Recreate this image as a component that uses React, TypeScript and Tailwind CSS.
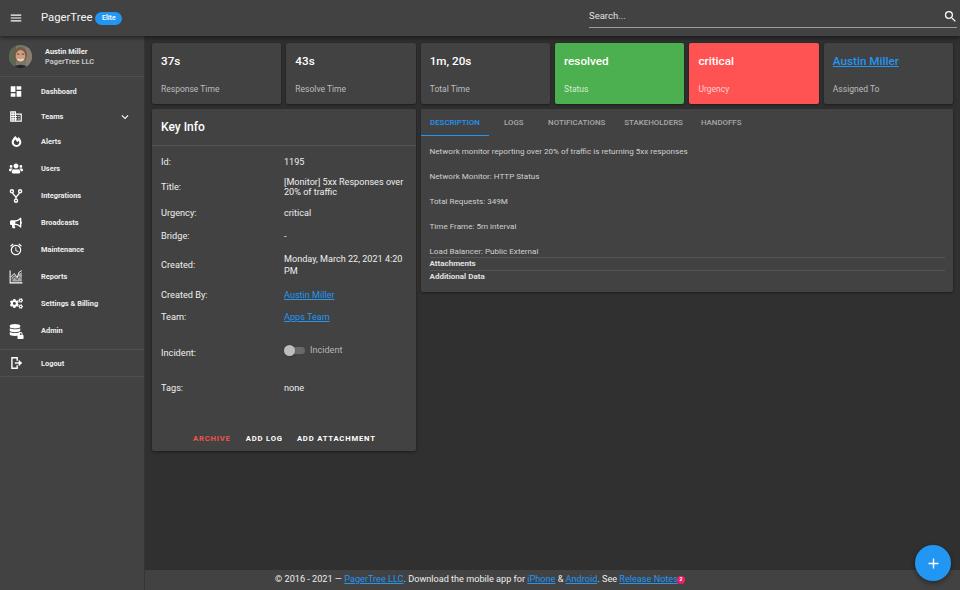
import { MdMenu, MdSearch, MdDashboard, MdDomain, MdExpandMore, MdAlarm, MdAdd } from "react-icons/md";
import { FaFireAlt, FaUsers, FaBullhorn, FaCogs, FaDatabase, FaLock } from "react-icons/fa";

function IntegrationIcon() {
  return (
    <svg width="14" height="14" viewBox="0 0 24 24" fill="none" stroke="currentColor" strokeWidth="2.4">
      <circle cx="5" cy="4" r="2.6" />
      <circle cx="19" cy="4" r="2.6" />
      <circle cx="12" cy="20" r="2.6" />
      <path d="M6 7l6 7 6-7M12 14v3" />
    </svg>
  );
}

function ReportIcon() {
  return (
    <svg width="15" height="14" viewBox="0 0 24 24" fill="none">
      <path d="M1 1h1.8v20.2H23V23H1z" fill="currentColor" />
      <path d="M4.5 19.5V13l4.5-4 4.5 5 3.5-7 5-3v15.5z" fill="currentColor" opacity=".55" />
      <path d="M3 12l6-6 5 7 3-9 5-3" stroke="currentColor" strokeWidth="1.6" />
      <path d="M4 20l5-8 5 5 3-6 5 5" stroke="#424242" strokeWidth="1.2" />
    </svg>
  );
}

function LogoutIcon() {
  return (
    <svg width="14" height="14" viewBox="0 0 24 24" fill="none" stroke="currentColor" strokeWidth="2.4">
      <path d="M14 8V3H5v18h9v-5" />
      <path d="M10 12h11" />
      <path d="M17 7.5v9l5-4.5z" fill="currentColor" strokeWidth="1" />
    </svg>
  );
}

function AdminIcon() {
  return (
    <span className="relative block w-[14px] h-[14px]">
      <FaDatabase size={12} />
      <FaLock size={7} className="absolute right-[-1px] bottom-[-1px]" />
    </span>
  );
}

function Avatar() {
  return (
    <svg width="23" height="23" viewBox="0 0 23 23" className="rounded-full shrink-0">
      <rect width="23" height="23" fill="#77786a" />
      <rect x="0" y="0" width="7" height="23" fill="#5c6650" />
      <rect x="17" y="0" width="6" height="23" fill="#8a7d72" />
      <ellipse cx="11.5" cy="9.5" rx="6.6" ry="7.6" fill="#7a5a44" />
      <ellipse cx="11.5" cy="11" rx="4.8" ry="6" fill="#cf9f84" />
      <path d="M8.5 14q3 2.2 6 0" stroke="#f6e9df" strokeWidth="1.1" fill="none" />
      <rect x="8" y="8.6" width="2.4" height="1" fill="#5a4034" />
      <rect x="12.8" y="8.6" width="2.4" height="1" fill="#5a4034" />
      <path d="M3 23q8.5-6.5 17 0z" fill="#23262e" />
    </svg>
  );
}

const nav = [
  { label: "Dashboard", icon: <MdDashboard size={15} />, h: "h-[25px]" },
  { label: "Teams", icon: <MdDomain size={15} />, h: "h-[25px]", chevron: true },
  { label: "Alerts", icon: <FaFireAlt size={11} />, h: "h-[25px]" },
  { label: "Users", icon: <FaUsers size={15} />, h: "h-[29px]" },
  { label: "Integrations", icon: <IntegrationIcon />, h: "h-[25px]" },
  { label: "Broadcasts", icon: <FaBullhorn size={12} />, h: "h-[29px]" },
  { label: "Maintenance", icon: <MdAlarm size={15} />, h: "h-[25px]" },
  { label: "Reports", icon: <ReportIcon />, h: "h-[29px]" },
  { label: "Settings & Billing", icon: <FaCogs size={13} />, h: "h-[25px]" },
  { label: "Admin", icon: <AdminIcon />, h: "h-[29px]" },
];

function NavItem({ label, icon, h, chevron }: { label: string; icon: React.ReactNode; h: string; chevron?: boolean }) {
  return (
    <div className={`flex items-center ${h} pl-[9px] pr-[12px] text-white`}>
      <span className="w-[14px] flex justify-center shrink-0">{icon}</span>
      <span className="ml-[18px] text-[7.4px] font-bold text-[#eeeeee] leading-none">{label}</span>
      {chevron && <MdExpandMore size={14} className="ml-auto" />}
    </div>
  );
}

function Stat({ value, label, tone = "bg-[#424242]", link, sub = "text-[#bdbdbd]" }: { value: string; label: string; tone?: string; link?: boolean; sub?: string }) {
  return (
    <div className={`${tone} h-[61px] rounded-[2px] shadow-[0_1px_3px_rgba(0,0,0,0.45)] px-[9px] pt-[11px]`}>
      <div className={`text-[11.7px] leading-[15px] font-medium ${link ? "text-[#2196f3] underline" : "text-white"}`}>{value}</div>
      <div className={`mt-[15px] text-[8.5px] leading-[11px] ${sub}`}>{label}</div>
    </div>
  );
}

function Row({ label, h, children }: { label: string; h: string; children: React.ReactNode }) {
  return (
    <div className={`flex items-center ${h}`}>
      <div className="w-[123px] shrink-0 text-[9.2px] text-[#eeeeee]">{label}</div>
      <div className="flex-1 text-[9.1px] leading-[10.5px] text-[#eeeeee]">{children}</div>
    </div>
  );
}

const Blue = ({ children }: { children: React.ReactNode }) => <a className="text-[#2196f3] underline">{children}</a>;

export default function App() {
  return (
    <div className="relative w-[960px] h-[590px] overflow-hidden bg-[#303030] flex flex-col font-['Roboto',sans-serif]">
      <header className="h-[36px] shrink-0 bg-[#424242] shadow-[0_2px_4px_rgba(0,0,0,0.45)] z-20 flex items-center pl-[9px] pr-[3px] text-white">
        <MdMenu size={14} />
        <span className="ml-[18px] text-[11.3px] text-[#f5f5f5]">PagerTree</span>
        <span className="ml-[3px] h-[13px] w-[27px] rounded-full bg-[#2196f3] flex items-center justify-center text-[7px] font-medium">Elite</span>
        <div className="ml-auto w-[368px] h-[22px] border-b border-[#9e9e9e] flex items-center justify-between mt-[-3px]">
          <span className="text-[9.5px] text-[#e0e0e0]">Search...</span>
          <MdSearch size={15} className="mr-[-1px]" />
        </div>
      </header>

      <div className="flex-1 flex min-h-0">
        <aside className="w-[145px] shrink-0 bg-[#424242] border-r border-[#353535] flex flex-col">
          <div className="h-[41px] flex items-center pl-[9px] border-b border-[#4f4f4f]">
            <Avatar />
            <div className="ml-[13px] mt-[2px] text-[7.4px] leading-[10.5px] font-bold">
              <div className="text-[#eeeeee]">Austin Miller</div>
              <div className="text-[#c4c4c4]">PagerTree LLC</div>
            </div>
          </div>
          <div className="flex flex-col pt-[2px]">
            {nav.map((n) => (
              <NavItem key={n.label} {...n} />
            ))}
          </div>
          <div className="mt-[4px] h-[28px] flex items-center pl-[9px] border-y border-[#4f4f4f] text-white">
            <span className="w-[14px] flex justify-center"><LogoutIcon /></span>
            <span className="ml-[18px] mt-[1px] text-[7.4px] font-bold text-[#eeeeee]">Logout</span>
          </div>
        </aside>

        <div className="flex-1 min-w-0 flex flex-col">
          <main className="flex-1 min-h-0 pt-[7px] px-[7px]">
            <div className="grid grid-cols-6 gap-x-[5.2px]">
              <Stat value="37s" label="Response Time" />
              <Stat value="43s" label="Resolve Time" />
              <Stat value="1m, 20s" label="Total Time" />
              <Stat value="resolved" label="Status" tone="bg-[#4caf50]" sub="text-[#d4ecd5]" />
              <Stat value="critical" label="Urgency" tone="bg-[#ff5252]" sub="text-[#ffcfcf]" />
              <Stat value="Austin Miller" label="Assigned To" link />
            </div>

            <div className="mt-[5px] flex gap-[5px] items-start">
              <section className="w-[264px] shrink-0 h-[342px] bg-[#424242] rounded-[2px] shadow-[0_1px_3px_rgba(0,0,0,0.45)] flex flex-col">
                <div className="h-[37px] flex items-center px-[9px] border-b border-[#555555] text-[12px] font-medium text-white">Key Info</div>
                <div className="px-[9px] pt-[4px]">
                  <Row label="Id:" h="h-[24px]">1195</Row>
                  <Row label="Title:" h="h-[26px]">[Monitor] 5xx Responses over 20% of traffic</Row>
                  <Row label="Urgency:" h="h-[26px]">critical</Row>
                  <Row label="Bridge:" h="h-[20px]">-</Row>
                  <Row label="Created:" h="h-[38px]"><span className="leading-[12px] block">Monday, March 22, 2021 4:20 PM</span></Row>
                  <Row label="Created By:" h="h-[22px]"><Blue>Austin Miller</Blue></Row>
                  <Row label="Team:" h="h-[22px]"><Blue>Apps Team</Blue></Row>
                  <Row label="Incident:" h="h-[50px]">
                    <span className="flex items-center mt-[-5px]">
                      <span className="relative w-[21px] h-[7px] rounded-full bg-[#6a6a6a]">
                        <span className="absolute left-0 top-[-2px] w-[11px] h-[11px] rounded-full bg-[#bdbdbd] shadow" />
                      </span>
                      <span className="ml-[5px] text-[#b5b5b5]">Incident</span>
                    </span>
                  </Row>
                  <Row label="Tags:" h="h-[20px]">none</Row>
                </div>
                <div className="mt-auto h-[18px] flex items-start pl-[41px] text-[7.7px] font-bold tracking-[0.8px]">
                  <span className="text-[#ef5350]">ARCHIVE</span>
                  <span className="ml-[15px] text-white">ADD LOG</span>
                  <span className="ml-[14px] text-white">ADD ATTACHMENT</span>
                </div>
              </section>

              <section className="flex-1 min-w-0 h-[183px] bg-[#424242] rounded-[2px] shadow-[0_1px_3px_rgba(0,0,0,0.45)] flex flex-col">
                <div className="h-[27px] flex text-[7.9px] font-medium text-[#a8a8a8]">
                  <div className="w-[68px] h-[27px] pl-[9px] pt-[8px] text-[#2196f3] border-b border-[#2196f3]">DESCRIPTION</div>
                  <div className="ml-[15px] pt-[8px]">LOGS</div>
                  <div className="ml-[24.5px] pt-[8px]">NOTIFICATIONS</div>
                  <div className="ml-[19px] pt-[8px]">STAKEHOLDERS</div>
                  <div className="ml-[18px] pt-[8px]">HANDOFFS</div>
                </div>
                <div className="px-[8.5px] text-[8.1px] text-[#d0d0d0] leading-[11px]">
                  <p className="mt-[10px]">Network monitor reporting over 20% of traffic is returning 5xx responses</p>
                  <p className="mt-[14px]">Network Monitor: HTTP Status</p>
                  <p className="mt-[14px]">Total Requests: 349M</p>
                  <p className="mt-[14px]">Time Frame: 5m interval</p>
                  <p className="mt-[14px]">Load Balancer: Public External</p>
                  <div className="border-t border-[#555555] h-[13px] font-bold text-[8px] leading-[12px] text-[#e0e0e0]">Attachments</div>
                  <div className="border-t border-[#555555] h-[13px] font-bold text-[8px] leading-[12px] text-[#e0e0e0]">Additional Data</div>
                </div>
              </section>
            </div>
          </main>

          <footer className="relative h-[20px] shrink-0 bg-[#424242] flex items-center justify-center text-[9.15px] text-[#eeeeee] pr-[145px]">
            <span>© 2016 - 2021 — <Blue>PagerTree LLC</Blue>. Download the mobile app for <Blue>iPhone</Blue> &amp; <Blue>Android</Blue>. See <Blue>Release Notes</Blue></span>
            <span className="ml-[-1px] w-[8px] h-[8px] rounded-full bg-[#e91e63] text-white text-[5px] font-bold flex items-center justify-center">2</span>
          </footer>
        </div>
      </div>

      <button className="absolute left-[915px] top-[545px] w-[36px] h-[36px] rounded-full bg-[#2196f3] text-white flex items-center justify-center shadow-[0_2px_5px_rgba(0,0,0,0.4)] z-30">
        <MdAdd size={17} />
      </button>
    </div>
  );
}
